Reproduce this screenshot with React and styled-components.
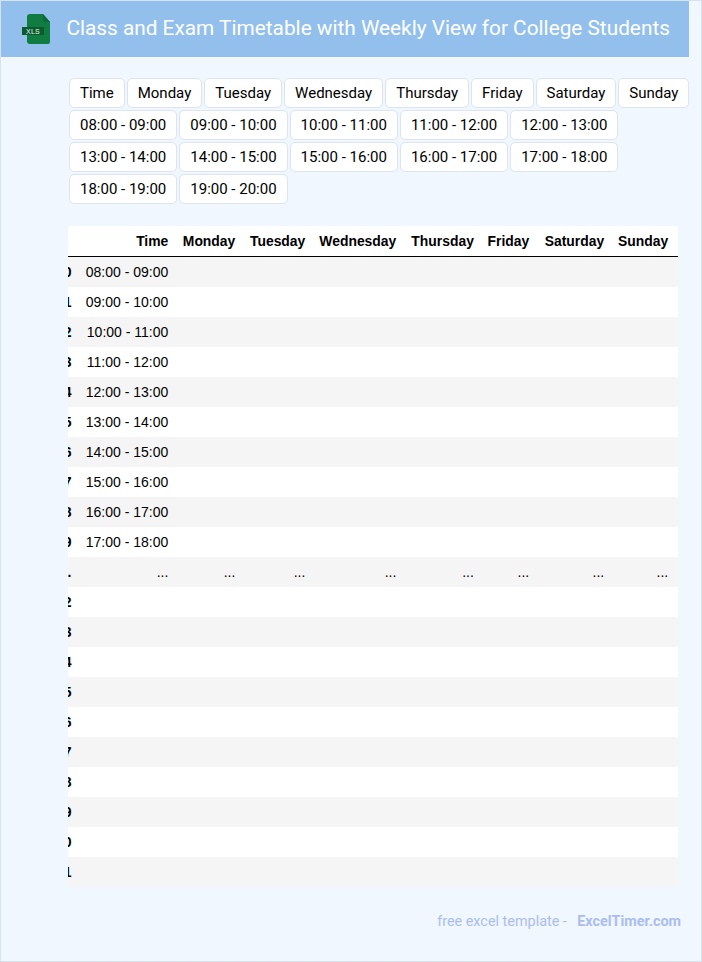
import React from "react";
import styled, { createGlobalStyle } from "styled-components";

const days = ["Monday", "Tuesday", "Wednesday", "Thursday", "Friday", "Saturday", "Sunday"];
const slots = [
  "08:00 - 09:00", "09:00 - 10:00", "10:00 - 11:00", "11:00 - 12:00", "12:00 - 13:00",
  "13:00 - 14:00", "14:00 - 15:00", "15:00 - 16:00", "16:00 - 17:00", "17:00 - 18:00",
  "18:00 - 19:00", "19:00 - 20:00",
];
const rowIds = [0, 1, 2, 3, 4, 5, 6, 7, 8, 9, "...", 12, 13, 14, 15, 16, 17, 18, 19, 20, 21];

const GlobalStyle = createGlobalStyle`
  html, body { margin: 0; padding: 0; }
  body { font-family: Roboto, "Liberation Sans", sans-serif; }
`;

const Page = styled.div`
  box-sizing: border-box;
  width: 702px;
  height: 962px;
  overflow: hidden;
  background: #f0f7ff;
  border: 1px solid #d6e2ee;
`;

const Header = styled.header`
  display: flex;
  align-items: center;
  width: 688px;
  height: 56px;
  padding-left: 20px;
  box-sizing: border-box;
  background: #92bfec;
`;

const Logo = styled.svg`
  flex: none;
  width: 30px;
  height: 32px;
  margin-right: 15.4px;
`;

const Title = styled.h1`
  margin: 0 0 2px;
  font-size: 20.8px;
  font-weight: 400;
  color: #fff;
  white-space: nowrap;
`;

const Content = styled.main`
  padding: 20px 0 0 67px;
`;

const Chips = styled.div`
  display: flex;
  flex-wrap: wrap;
  width: 624px;
`;

const Chip = styled.span`
  box-sizing: border-box;
  height: 30px;
  margin: 1px;
  padding: 0 10px;
  border: 1px solid #dbe4f0;
  border-radius: 5px;
  background: #fff;
  color: #000;
  font-size: 15px;
  line-height: 28px;
  white-space: nowrap;
`;

const TableClip = styled.div`
  width: 610px;
  margin-top: 21px;
  overflow: hidden;
  font-family: "Liberation Sans", Arial, sans-serif;
  font-size: 14px;
  color: #000;
`;

const Row = styled.div`
  display: grid;
  grid-template-columns: 29.5px 106.8px 67px 70px 91px 77.6px 55.3px 75px 64px;
  width: 637px;
  height: ${(p) => (p.$head ? "31px" : "30px")};
  margin-left: -26px;
  background: ${(p) => (p.$shade ? "#f5f5f5" : "#fff")};
  ${(p) => p.$head && "border-bottom: 1px solid #000; box-sizing: border-box;"}
`;

const Cell = styled.div`
  padding-right: 10px;
  text-align: right;
  white-space: nowrap;
  line-height: 30px;
`;

const HeadCell = styled(Cell)`
  font-size: 13.9px;
  font-weight: 700;
  line-height: 31px;
`;

const IndexCell = styled(Cell)`
  padding-right: 0;
  font-weight: 700;
`;

const Footer = styled.footer`
  display: flex;
  justify-content: flex-end;
  width: 613px;
  margin-top: 26px;
  font-size: 14.4px;
  line-height: 18px;
  color: #abbdf0;
`;

const FooterLink = styled.span`
  margin-left: 10.4px;
  font-weight: 700;
`;

function XlsIcon() {
  return (
    <Logo viewBox="0 0 30 32">
      <path d="M9 1h13l7 8v20a2 2 0 0 1-2 2H9a3 3 0 0 1-3-3V4a3 3 0 0 1 3-3z" fill="#107c41" />
      <path d="M22 1l7 8h-5a2 2 0 0 1-2-2z" fill="#0b6b37" />
      <rect x="1" y="14" width="22" height="8" fill="#0a5c2f" />
      <text x="12" y="21" fontSize="7" letterSpacing="0.3" fontFamily="Liberation Sans, sans-serif" fill="#e8f3ec" textAnchor="middle">
        XLS
      </text>
    </Logo>
  );
}

export default function App() {
  return (
    <>
      <GlobalStyle />
      <Page>
        <Header>
          <XlsIcon />
          <Title>Class and Exam Timetable with Weekly View for College Students</Title>
        </Header>
        <Content>
          <Chips>
            {["Time", ...days, ...slots].map((label) => (
              <Chip key={label}>{label}</Chip>
            ))}
          </Chips>
          <TableClip>
            <Row $head>
              <IndexCell />
              {["Time", ...days].map((d) => (
                <HeadCell key={d}>{d}</HeadCell>
              ))}
            </Row>
            {rowIds.map((id, i) => {
              const dots = id === "...";
              return (
                <Row key={id} $shade={i % 2 === 0}>
                  <IndexCell>{dots ? "..." : id}</IndexCell>
                  <Cell>{dots ? "..." : i < 10 ? slots[i] : ""}</Cell>
                  {days.map((d) => (
                    <Cell key={d}>{dots ? "..." : ""}</Cell>
                  ))}
                </Row>
              );
            })}
          </TableClip>
          <Footer>
            <span>free excel template -</span>
            <FooterLink>ExcelTimer.com</FooterLink>
          </Footer>
        </Content>
      </Page>
    </>
  );
}
